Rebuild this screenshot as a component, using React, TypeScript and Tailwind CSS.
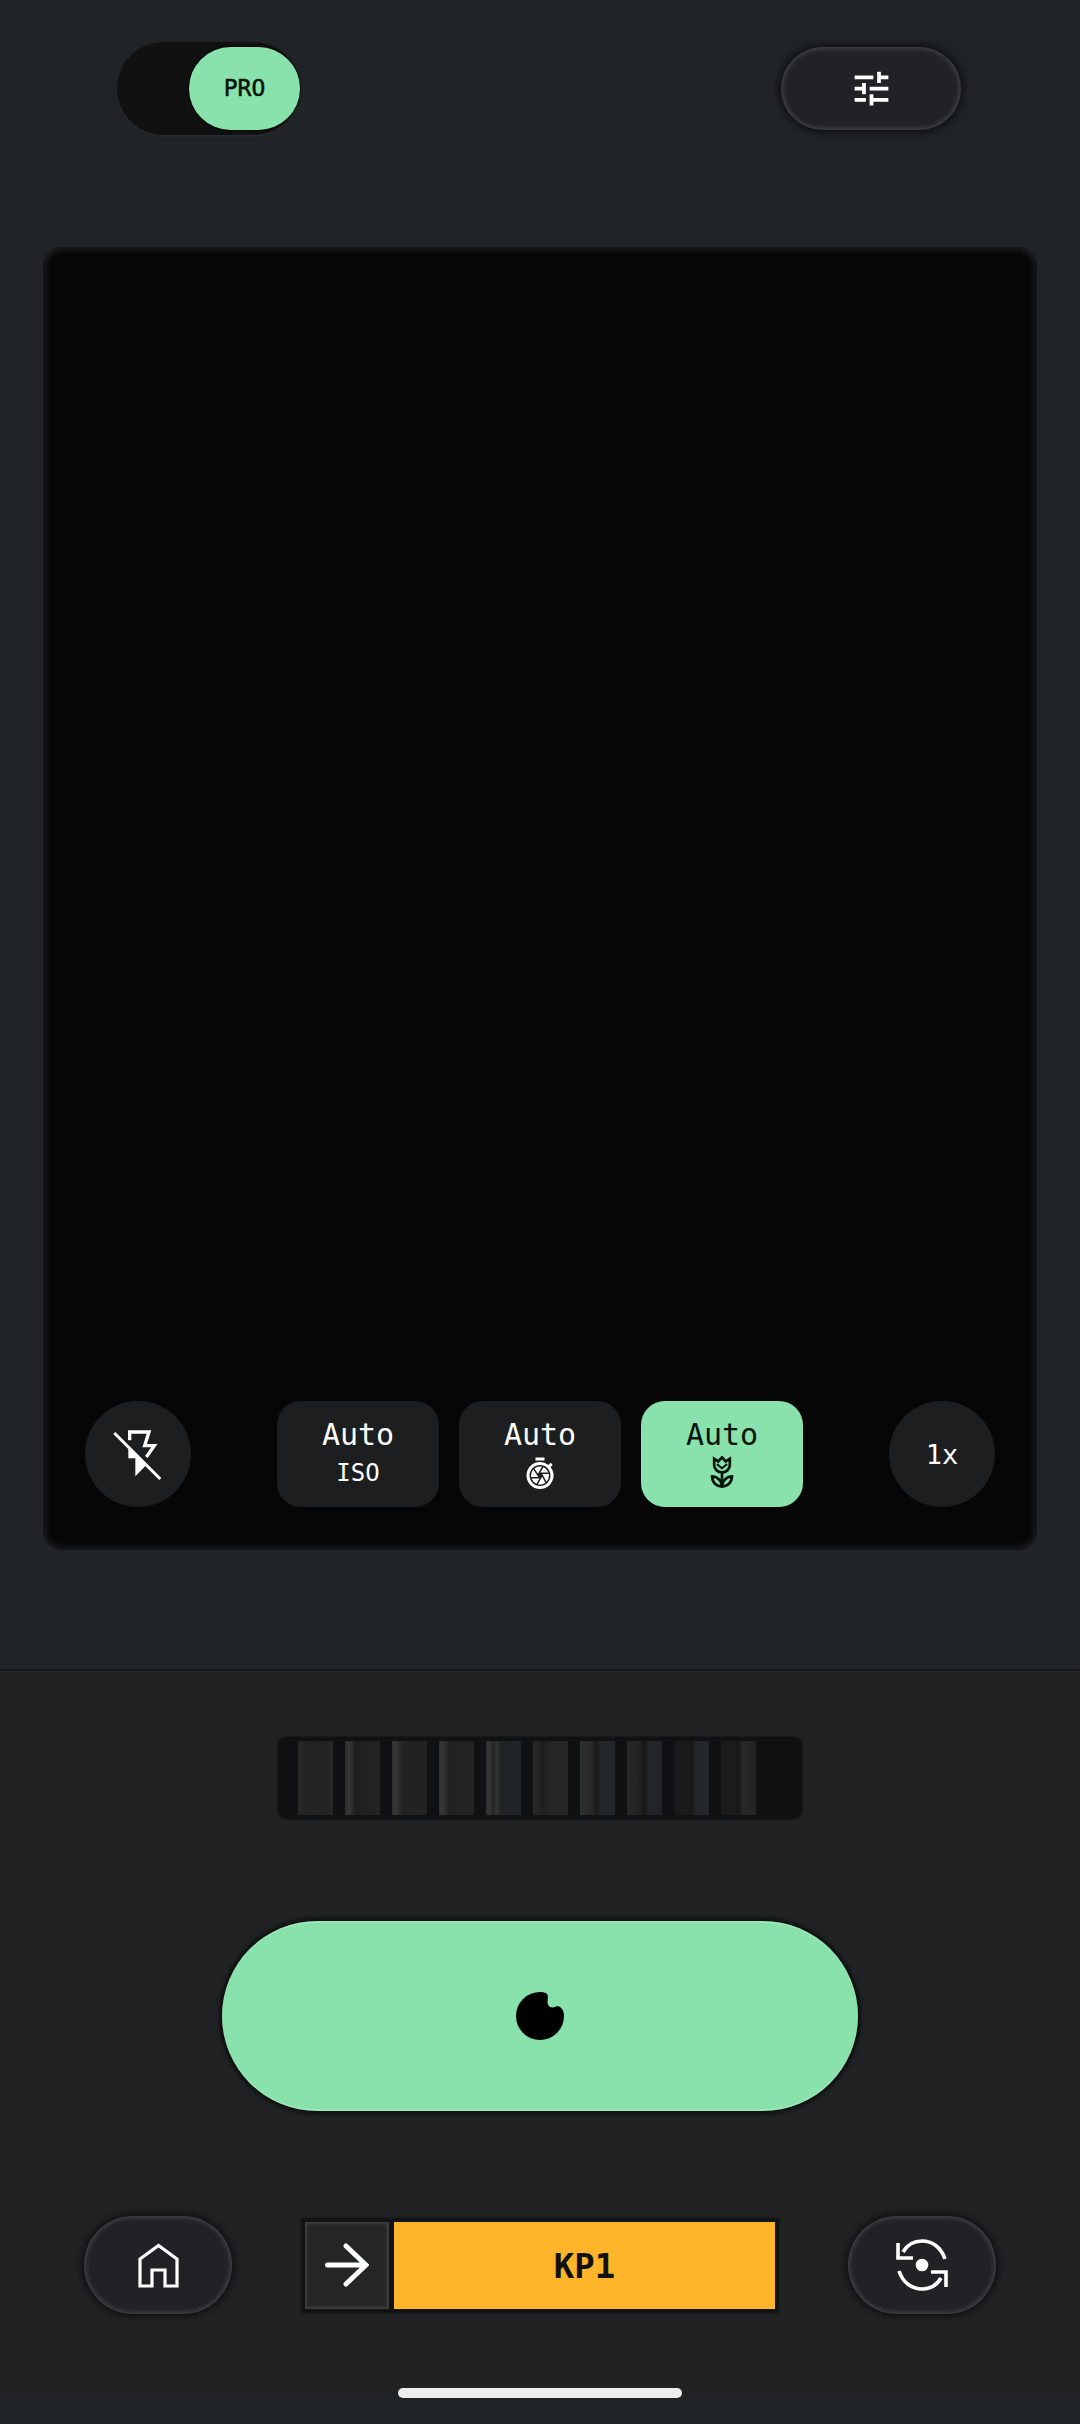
import React from "react";
import { MdTune, MdShutterSpeed } from "react-icons/md";

const raised =
  "bg-[#212225] shadow-[0_0_6px_3px_rgba(0,0,0,0.5),inset_0_0_4px_2px_rgba(255,255,255,0.15)]";

const FlashOff = () => (
  <svg width="60" height="60" viewBox="233 163 180 180" fill="none">
    <path d="M298 212V187H356L343 228H372L348 262" stroke="white" strokeWidth="10" />
    <path d="M294 214V266H315V320L346 288Z" fill="white" />
    <path d="M268 194L400 326" stroke="#1c1e20" strokeWidth="12" />
    <path d="M252 190L390 328" stroke="white" strokeWidth="9" />
  </svg>
);

const Tulip = () => (
  <svg width="24" height="32" viewBox="518 266 70 94" fill="none" stroke="#06140c" strokeWidth="8">
    <path d="M530 274V292C530 306 541 314 553 314C565 314 576 306 576 292V274L564 282L553 270L542 282Z" />
    <path d="M538 290L553 302L568 290" strokeWidth="6" />
    <path d="M553 314V355" />
    <path d="M524 326C538 326 553 338 553 355C537 355 524 344 524 326Z" />
    <path d="M582 326C568 326 553 338 553 355C569 355 582 344 582 326Z" />
  </svg>
);

const Home = () => (
  <svg width="41" height="45" viewBox="0 0 41 45" fill="none" stroke="white" strokeWidth="3.2">
    <path d="M2 43V16L20.5 2.5L39 16V43H27V27H14V43Z" />
  </svg>
);

const Arrow = () => (
  <svg width="44" height="44" viewBox="0 0 44 44" fill="none" stroke="white" strokeWidth="5" strokeLinecap="round">
    <path d="M2.5 22H40M21 3L41 22L21 41" />
  </svg>
);

const Flip = () => (
  <svg width="54" height="54" viewBox="0 0 54 54" fill="none" stroke="white" strokeWidth="3.6">
    <path d="M8 14C12 7 19 3 27 3C37 3 46 9 50 21" />
    <path d="M3 5V20H18" />
    <path d="M4 33C8 45 17 51 27 51C35 51 42 47 46 40" />
    <path d="M51 49V34H36" />
    <circle cx="27" cy="27" r="6.3" fill="white" stroke="none" />
  </svg>
);

const Blob = () => (
  <svg width="48" height="48" viewBox="0 0 47 47">
    <path
      d="M23.5 0C26 0 29 .5 30.5 2C32 4 30.5 8 31 11C31.5 14 34 16 37 15C39.5 14 41.5 13 43.5 15C46 17 47 20 47 23.5A23.5 23.5 0 1 1 23.5 0Z"
      fill="#000"
    />
  </svg>
);

export default function App() {
  return (
    <div className="h-[2424px] w-[1080px] overflow-hidden bg-[#202426] font-['DejaVu_Sans_Mono',monospace]">
      {/* top bar */}
      <div className="flex items-center justify-between pl-[117px] pr-[119px] pt-[42px]">
        <div className="flex h-[93px] w-[183px] items-center justify-end rounded-full bg-[#111112] shadow-[0_1px_2px_rgba(255,255,255,0.05)]">
          <div className="flex h-[83px] w-[111px] items-center justify-center rounded-full bg-[#89e2ab] text-[23px] text-[#06140c] shadow-[0_0_2px_1px_rgba(0,0,0,0.6)] [-webkit-text-stroke:0.5px_#06140c]">
            PRO
          </div>
        </div>
        <div className={`flex h-[83px] w-[180px] items-center justify-center rounded-full ${raised}`}>
          <MdTune className="text-white" size={45} />
        </div>
      </div>

      {/* viewfinder */}
      <div className="mx-[43px] mt-[112px] flex h-[1303px] flex-col justify-end rounded-[20px] bg-[#060606] px-[42px] pb-[43px] shadow-[inset_0_0_5px_4px_#17191a]">
        <div className="flex items-center justify-between text-white">
          <div className="flex h-[106px] w-[106px] items-center justify-center rounded-full bg-[#1c1e20]">
            <FlashOff />
          </div>
          <div className="flex gap-[20px]">
            <div className="flex h-[106px] w-[162px] flex-col items-center rounded-[24px] bg-[#1c1e20] pt-[16px]">
              <span className="text-[30px] leading-[36px]">Auto</span>
              <span className="mt-[5px] text-[24px] leading-[30px]">ISO</span>
            </div>
            <div className="flex h-[106px] w-[162px] flex-col items-center rounded-[24px] bg-[#1c1e20] pt-[16px]">
              <span className="text-[30px] leading-[36px]">Auto</span>
              <MdShutterSpeed size={36} className="mt-[3px] text-white" />
            </div>
            <div className="flex h-[106px] w-[162px] flex-col items-center rounded-[24px] bg-[#89e2ab] pt-[16px] text-[#06140c]">
              <span className="text-[30px] leading-[36px]">Auto</span>
              <span className="mt-[3px]">
                <Tulip />
              </span>
            </div>
          </div>
          <div className="flex h-[106px] w-[106px] items-center justify-center rounded-full bg-[#1c1e20] pt-[3px] text-[27px]">
            1x
          </div>
        </div>
      </div>

      {/* lower panel */}
      <div className="mt-[119px] border-t-2 border-[#15171a] bg-[#202224] shadow-[inset_0_1px_0_rgba(255,255,255,0.04)]">
        {/* wheel */}
        <div className="mx-auto mt-[66px] flex h-[82px] w-[524px] items-center gap-[12px] rounded-[8px] bg-[#0f1112] pl-[20px] shadow-[0_0_2px_1px_rgba(0,0,0,0.3)]">
          <div className="h-[74px] w-[35px] bg-[linear-gradient(90deg,#272828_0%,#242424_20%,#222222_60%,#222426_85%,#262727_100%)]" />
          <div className="h-[74px] w-[35px] bg-[linear-gradient(90deg,#2b2c2c_0%,#363737_10%,#2e2f2f_18%,#1e1f20_30%,#1e2021_45%,#222426_100%)]" />
          <div className="h-[74px] w-[35px] bg-[linear-gradient(90deg,#2e2f2f_0%,#383939_10%,#2e2e2e_18%,#232323_32%,#222222_100%)]" />
          <div className="h-[74px] w-[35px] bg-[linear-gradient(90deg,#2e2f2f_0%,#363736_10%,#2c2c2c_18%,#202122_32%,#212324_60%,#232323_100%)]" />
          <div className="h-[74px] w-[35px] bg-[linear-gradient(90deg,#2e2f2f_0%,#353636_10%,#232424_20%,#323333_30%,#1f2324_44%,#212628_100%)]" />
          <div className="h-[74px] w-[35px] bg-[linear-gradient(90deg,#292a2a_0%,#1e1f20_30%,#242628_55%,#242627_100%)]" />
          <div className="h-[74px] w-[35px] bg-[linear-gradient(90deg,#2f3030_0%,#292828_32%,#1a1b1b_48%,#232729_58%,#232729_100%)]" />
          <div className="h-[74px] w-[35px] bg-[linear-gradient(90deg,#272828_0%,#242424_30%,#171818_50%,#24272a_64%,#212325_100%)]" />
          <div className="h-[74px] w-[35px] bg-[linear-gradient(90deg,#17181a_0%,#1a1b1a_40%,#161717_50%,#23262a_64%,#24272a_100%)]" />
          <div className="h-[74px] w-[35px] bg-[linear-gradient(90deg,#1c1b1b_0%,#1d1b1b_40%,#141515_50%,#262829_62%,#212325_100%)]" />
        </div>

        {/* shutter */}
        <div className="mt-[102px] flex justify-center">
          <div className="flex h-[190px] w-[636px] items-center justify-center rounded-full bg-[#89e2ab] shadow-[0_0_4px_3px_rgba(0,0,0,0.6),inset_0_2px_1px_rgba(255,255,255,0.15),inset_0_-2px_1px_rgba(255,255,255,0.15)]">
            <Blob />
          </div>
        </div>

        {/* bottom row */}
        <div className="mt-[105px] flex items-center justify-between pl-[84px] pr-[84px]">
          <div className={`flex h-[98px] w-[148px] items-center justify-center rounded-full ${raised}`}>
            <Home />
          </div>
          <div className="flex h-[87px] w-[470px] gap-[5px] bg-[#111213] shadow-[0_0_2px_4px_#111213]">
            <div className="flex h-[87px] w-[84px] items-center justify-center bg-[#242527] shadow-[inset_0_0_3px_2px_rgba(255,255,255,0.13)]">
              <Arrow />
            </div>
            <div className="flex h-[87px] flex-1 items-center justify-center bg-[#ffb52a] pt-[2px] text-[34px] font-bold text-[#111111]">
              KP1
            </div>
          </div>
          <div className={`flex h-[98px] w-[148px] items-center justify-center rounded-full ${raised}`}>
            <Flip />
          </div>
        </div>

        {/* home indicator */}
        <div className="mx-auto mt-[74px] h-[10px] w-[284px] rounded-full bg-[#eeeeee]" />
      </div>
    </div>
  );
}
